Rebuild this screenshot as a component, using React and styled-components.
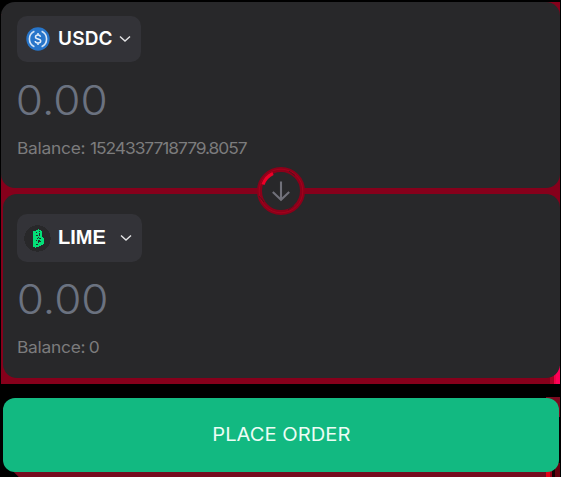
import React from 'react';
import styled, { createGlobalStyle } from 'styled-components';

const GlobalStyle = createGlobalStyle`
  * { box-sizing: border-box; }
  body { margin: 0; background: #000; overflow: hidden; }
`;

const Page = styled.main`
  width: 561px;
  height: 477px;
  padding: 2px 1px 0 1px;
  display: flex;
  flex-direction: column;
  background: #000;
  font-family: Inter, 'Open Sans', sans-serif;
`;

const Swap = styled.section`
  position: relative;
  height: 382px;
  display: flex;
  flex-direction: column;
  gap: 6px;
  background: linear-gradient(#000 0 12px, transparent 12px) 0 0 / 14px 12px no-repeat,
    linear-gradient(90deg, #a90024 0 4px, #f00046 4px 6px, #ff0058 6px) 100% 100% / 10px 18px no-repeat,
    #86001b;
`;

const Card = styled.div`
  height: ${({ $h }) => $h}px;
  margin-left: ${({ $inset }) => $inset}px;
  padding: ${({ $pad }) => $pad};
  border-radius: 14px;
  background: #28282a;
  display: flex;
  flex-direction: column;
  align-items: flex-start;
`;

const TokenButton = styled.button`
  width: ${({ $w }) => $w}px;
  height: ${({ $h }) => $h}px;
  padding: 0 10px 0 ${({ $left }) => $left}px;
  border: 0;
  border-radius: 10px;
  background: #333338;
  display: flex;
  align-items: center;
  justify-content: flex-start;
  flex: none;

  svg:last-child { margin-left: auto; }
`;

const TokenName = styled.span`
  margin-left: ${({ $gap }) => $gap}px;
  padding-bottom: ${({ $lift }) => $lift}px;
  color: #fff;
  font: ${({ $font }) => $font};
  letter-spacing: ${({ $track }) => $track}px;
  white-space: nowrap;
`;

const Amount = styled.div`
  height: 40px;
  margin-top: ${({ $top }) => $top}px;
  color: #6b7280;
  font-size: 41px;
  font-weight: 300;
  line-height: 40px;
  transform: scaleX(1.075);
  transform-origin: ${({ $origin }) => $origin}px 50%;
`;

const Balance = styled.div`
  margin-top: ${({ $top }) => $top}px;
  color: #7c7c7d;
  font-size: 16.4px;
  line-height: 20px;
  letter-spacing: -0.25px;
  white-space: nowrap;
  transform: scaleX(1.06);
  transform-origin: 0 50%;
`;

const Digits = styled.span`
  margin-left: ${({ $shift }) => $shift}px;
  letter-spacing: -0.98px;
`;

const SwitchButton = styled.button`
  position: absolute;
  left: 256px;
  top: 165px;
  width: 48px;
  height: 48px;
  padding: 0;
  border: 0;
  background: none;

  svg { display: block; }
`;

const OrderButton = styled.button`
  display: block;
  width: 556px;
  height: 74px;
  margin: 0 1px 0 2px;
  padding: 0 0 2px;
  border: 0;
  border-radius: 12px;
  background: #12b981;
  color: #edfdf5;
  font-family: inherit;
  font-size: 18.5px;
  font-weight: 400;
`;

const OrderLabel = styled.span`
  display: inline-block;
  transform: scaleX(1.09);
`;

const Footer = styled.section`
  height: 80px;
  margin-top: 13px;
  padding-top: 0.5px;
  background: linear-gradient(#7c0a20, #7c0a20) 100% 0 / 14px 20px no-repeat,
    linear-gradient(90deg, #e60016 0 4px, #990016 4px 6px, #160003 6px 9px, #64000f 9px) 100% 100% / 14px 14px no-repeat,
    linear-gradient(45deg, #000 12px, transparent 13px),
    linear-gradient(#000 0 72px, #760c20 72px);
`;

const UsdcIcon = () => (
  <svg width="24" height="24" viewBox="0 0 24 24" fill="none">
    <circle cx="12" cy="12" r="11.7" fill="#2775ca" />
    <path d="M8.4 4.2a8.6 8.6 0 0 0 0 15.6M15.6 4.2a8.6 8.6 0 0 1 0 15.6" stroke="#d5e4f5" strokeWidth="1.6" />
    <path d="M14.5 9.8c-.2-1.1-1.1-1.7-2.5-1.7s-2.5.7-2.5 1.8c0 2.8 5.2 1.3 5.2 4.1 0 1.3-1.1 2-2.7 2s-2.7-.7-2.8-2M12 6v2M12 16v2" stroke="#e3eefa" strokeWidth="1.5" />
  </svg>
);

const LimeIcon = () => (
  <svg width="27" height="27" viewBox="0 0 27 27" fill="none" shapeRendering="crispEdges">
    <circle cx="13.5" cy="13.5" r="13.2" fill="#28282a" />
    <path d="M9 6h3V5h2V4h1v1h2v1h1v6h1v1h1v6h-1v1h-2v1h-2v1h-3v1h-1v-1h-2v-2H9z" fill="#03e078" />
    <path d="M12 7h1v1h-1zM15 6h1v1h-1zM15 8h1v3h-1zM12 10h2v1h-2zM14 12h1v1h-1zM13 13h1v1h-1zM15 13h2v1h-2zM12 15h1v1h-1zM14 15h2v1h1v1h-2v1h-1zM12 19h2v1h-2z" fill="#28282a" />
  </svg>
);

const Chevron = () => (
  <svg width="12" height="8" viewBox="0 0 12 8" fill="none" stroke="#e4e4e5" strokeWidth="1.4">
    <path d="m1 1.5 5 4.5 5-4.5" />
  </svg>
);

const SwitchIcon = () => (
  <svg width="48" height="48" viewBox="0 0 48 48" fill="none">
    <circle cx="24" cy="24" r="21.5" fill="#28282a" stroke="#8b0019" strokeWidth="5" />
    <circle cx="24" cy="24" r="21.8" stroke="#a9001d" strokeWidth=".8" />
    <path d="M6 17.5Q9 9.5 16 6.5" stroke="#ed0027" strokeWidth="3.2" />
    <path d="m32 4 6 4.5M31 43l6-4.5M2 29l5 6" stroke="#3b1921" strokeWidth=".8" />
    <path d="M24 14.5V33M15.8 25l8.2 7.7 8.2-7.7" stroke="#71717a" strokeWidth="2.1" />
  </svg>
);

export default function App() {
  return (
    <Page>
      <GlobalStyle />
      <Swap>
        <Card $h={186} $inset={0} $pad="14px 16px">
          <TokenButton $w={124} $h={46} $left={9}>
            <UsdcIcon />
            <TokenName $gap={8} $lift={1} $font="600 19px Inter, sans-serif" $track={0.15}>USDC</TokenName>
            <Chevron />
          </TokenButton>
          <Amount $top={18} $origin={16}>0.00</Amount>
          <Balance $top={18}>Balance: <Digits $shift={0}>1524337718779.8057</Digits></Balance>
        </Card>
        <Card $h={184} $inset={2} $pad="20px 14px">
          <TokenButton $w={125} $h={48} $left={7}>
            <LimeIcon />
            <TokenName $gap={7} $lift={1} $font="700 20px 'Liberation Sans', sans-serif" $track={0}>LIME</TokenName>
            <Chevron />
          </TokenButton>
          <Amount $top={17} $origin={4}>0.00</Amount>
          <Balance $top={18}>Balance: <Digits $shift={-1}>0</Digits></Balance>
        </Card>
        <SwitchButton aria-label="Switch tokens"><SwitchIcon /></SwitchButton>
      </Swap>
      <Footer>
        <OrderButton><OrderLabel>PLACE ORDER</OrderLabel></OrderButton>
      </Footer>
    </Page>
  );
}
